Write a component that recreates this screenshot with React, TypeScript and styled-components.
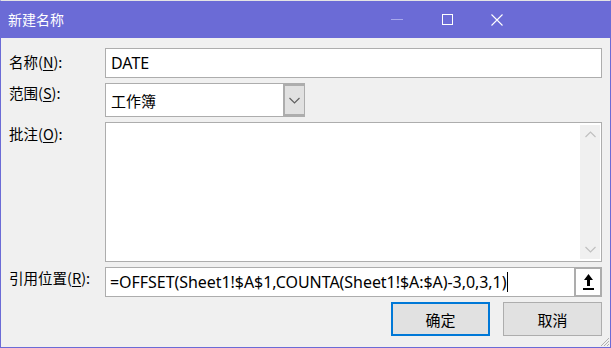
import React from "react";
import styled, { createGlobalStyle } from "styled-components";

const Global = createGlobalStyle`
  html, body { margin: 0; padding: 0; background: #f0f0f0; }
  body { font-family: "Noto Sans", "Noto Sans CJK SC", sans-serif; }
`;

const Window = styled.div`
  width: 611px;
  height: 348px;
  box-sizing: border-box;
  border: 1px solid #6b6bd6;
  border-top: 1px solid #e4e4e4;
  background: #f0f0f0;
  display: flex;
  flex-direction: column;
  position: relative;
  overflow: hidden;
`;

const TitleBar = styled.div`
  height: 37px;
  background: #6b6bd6;
  display: flex;
  align-items: center;
  padding: 0 89px 0 8px;
  margin: 0 -1px;
`;

const Title = styled.div`
  flex: 1;
  color: #fff;
  font-family: "Noto Sans CJK SC", sans-serif;
  font-size: 14px;
  padding-bottom: 1px;
`;

const Ctl = styled.div`
  width: 50px;
  height: 37px;
  display: flex;
  align-items: center;
  justify-content: center;
`;

const Body = styled.div`
  flex: 1;
  display: grid;
  grid-template-columns: 96px 497px;
  grid-auto-rows: auto;
  row-gap: 5px;
  padding: 10px 0 0 8px;
  align-content: start;
`;

const Label = styled.div<{ $pt?: number }>`
  font-family: "Noto Sans CJK SC", sans-serif;
  font-size: 14.5px;
  line-height: 20px;
  color: #000;
  padding-top: ${(p) => p.$pt ?? 3}px;
  u { text-decoration: underline; text-underline-offset: 2px; }
`;

const TextBox = styled.div`
  height: 30px;
  box-sizing: border-box;
  border: 1px solid #adadad;
  background: #fff;
  display: flex;
  align-items: center;
  padding-left: 5px;
  font-size: 16px;
  color: #000;
  white-space: nowrap;
`;

const Select = styled.div`
  width: 200px;
  height: 34px;
  box-sizing: border-box;
  border: 1px solid #adadad;
  background: #fff;
  display: flex;
  align-items: stretch;
`;

const SelectValue = styled.div`
  flex: 1;
  display: flex;
  align-items: center;
  padding-left: 5px;
  font-family: "Noto Sans CJK SC", sans-serif;
  font-size: 15px;
`;

const DropBtn = styled.div`
  width: 21px;
  box-sizing: border-box;
  border: 2px solid #adadad;
  border-right: none;
  background: #e1e1e1;
  display: flex;
  align-items: center;
  justify-content: center;
`;

const Memo = styled.div`
  height: 140px;
  box-sizing: border-box;
  border: 1px solid #adadad;
  background: #fff;
  display: flex;
  justify-content: flex-end;
  padding: 2px 1px 2px 0;
`;

const ScrollBar = styled.div`
  width: 20px;
  background: #f0f0f0;
  display: flex;
  flex-direction: column;
  justify-content: space-between;
  align-items: center;
  padding: 6px 0;
`;

const RefRow = styled.div`
  display: flex;
  height: 30px;
`;

const RefBox = styled(TextBox)`
  flex: 1;
  padding-left: 4px;
  letter-spacing: -0.05px;
`;

const Caret = styled.span`
  display: inline-block;
  width: 1px;
  height: 20px;
  background: #000;
  margin-left: 1px;
`;

const CollapseBtn = styled.div`
  width: 27px;
  box-sizing: border-box;
  border: 2px solid #adadad;
  border-left-width: 1px;
  background: #fff;
  display: flex;
  align-items: center;
  justify-content: center;
`;

const Buttons = styled.div`
  grid-column: 1 / -1;
  display: flex;
  justify-content: flex-end;
  gap: 13px;
`;

const Button = styled.div<{ $primary?: boolean }>`
  width: 99px;
  height: 34px;
  box-sizing: border-box;
  border: ${(p) => (p.$primary ? "2px solid #0078d7" : "1px solid #adadad")};
  background: #e1e1e1;
  display: flex;
  align-items: center;
  justify-content: center;
  font-family: "Noto Sans CJK SC", sans-serif;
  font-size: 15px;
  color: #000;
`;

const Grip = styled.svg`
  position: absolute;
  right: 0;
  bottom: 0;
`;

const Chevron = ({ up, color = "#606060" }: { up?: boolean; color?: string }) => (
  <svg width="11" height="7" viewBox="0 0 11 7">
    <path
      d={up ? "M0.5 6 L5.5 1 L10.5 6" : "M0.5 1 L5.5 6 L10.5 1"}
      stroke={color}
      strokeWidth="1.2"
      fill="none"
    />
  </svg>
);

export default function App() {
  return (
    <>
      <Global />
      <Window>
        <TitleBar>
          <Title>新建名称</Title>
          <Ctl>
            <svg width="12" height="2" viewBox="0 0 12 2">
              <rect x="0" y="0" width="12" height="1" fill="#a8a8ec" />
            </svg>
          </Ctl>
          <Ctl>
            <svg width="11" height="11" viewBox="0 0 11 11">
              <rect x="0.5" y="0.5" width="10" height="10" stroke="#fff" fill="none" />
            </svg>
          </Ctl>
          <Ctl>
            <svg width="12" height="12" viewBox="0 0 12 12">
              <path d="M0.5 0.5 L11.5 11.5 M11.5 0.5 L0.5 11.5" stroke="#fff" strokeWidth="1.1" />
            </svg>
          </Ctl>
        </TitleBar>
        <Body>
          <Label $pt={4}>
            名称(<u>N</u>):
          </Label>
          <TextBox>DATE</TextBox>

          <Label $pt={0}>
            范围(<u>S</u>):
          </Label>
          <Select>
            <SelectValue>工作簿</SelectValue>
            <DropBtn>
              <Chevron />
            </DropBtn>
          </Select>

          <Label $pt={2}>
            批注(<u>O</u>):
          </Label>
          <Memo>
            <ScrollBar>
              <Chevron up color="#c0c0c0" />
              <Chevron color="#c0c0c0" />
            </ScrollBar>
          </Memo>

          <Label $pt={1}>
            引用位置(<u>R</u>):
          </Label>
          <RefRow>
            <RefBox>
              =OFFSET(Sheet1!$A$1,COUNTA(Sheet1!$A:$A)-3,0,3,1)
              <Caret />
            </RefBox>
            <CollapseBtn>
              <svg width="11" height="16" viewBox="0 0 11 16">
                <path d="M5.5 0 L10 6 L7 6 L7 12 L4 12 L4 6 L1 6 Z" fill="#000" />
                <rect x="0" y="14" width="11" height="2" fill="#000" />
              </svg>
            </CollapseBtn>
          </RefRow>

          <Buttons>
            <Button $primary>确定</Button>
            <Button>取消</Button>
          </Buttons>
        </Body>
        <Grip width="12" height="12" viewBox="0 0 12 12">
          <path d="M11 3 L3 11 M11 6 L6 11 M11 9 L9 11" stroke="#b0b0b0" strokeWidth="1" />
        </Grip>
      </Window>
    </>
  );
}
